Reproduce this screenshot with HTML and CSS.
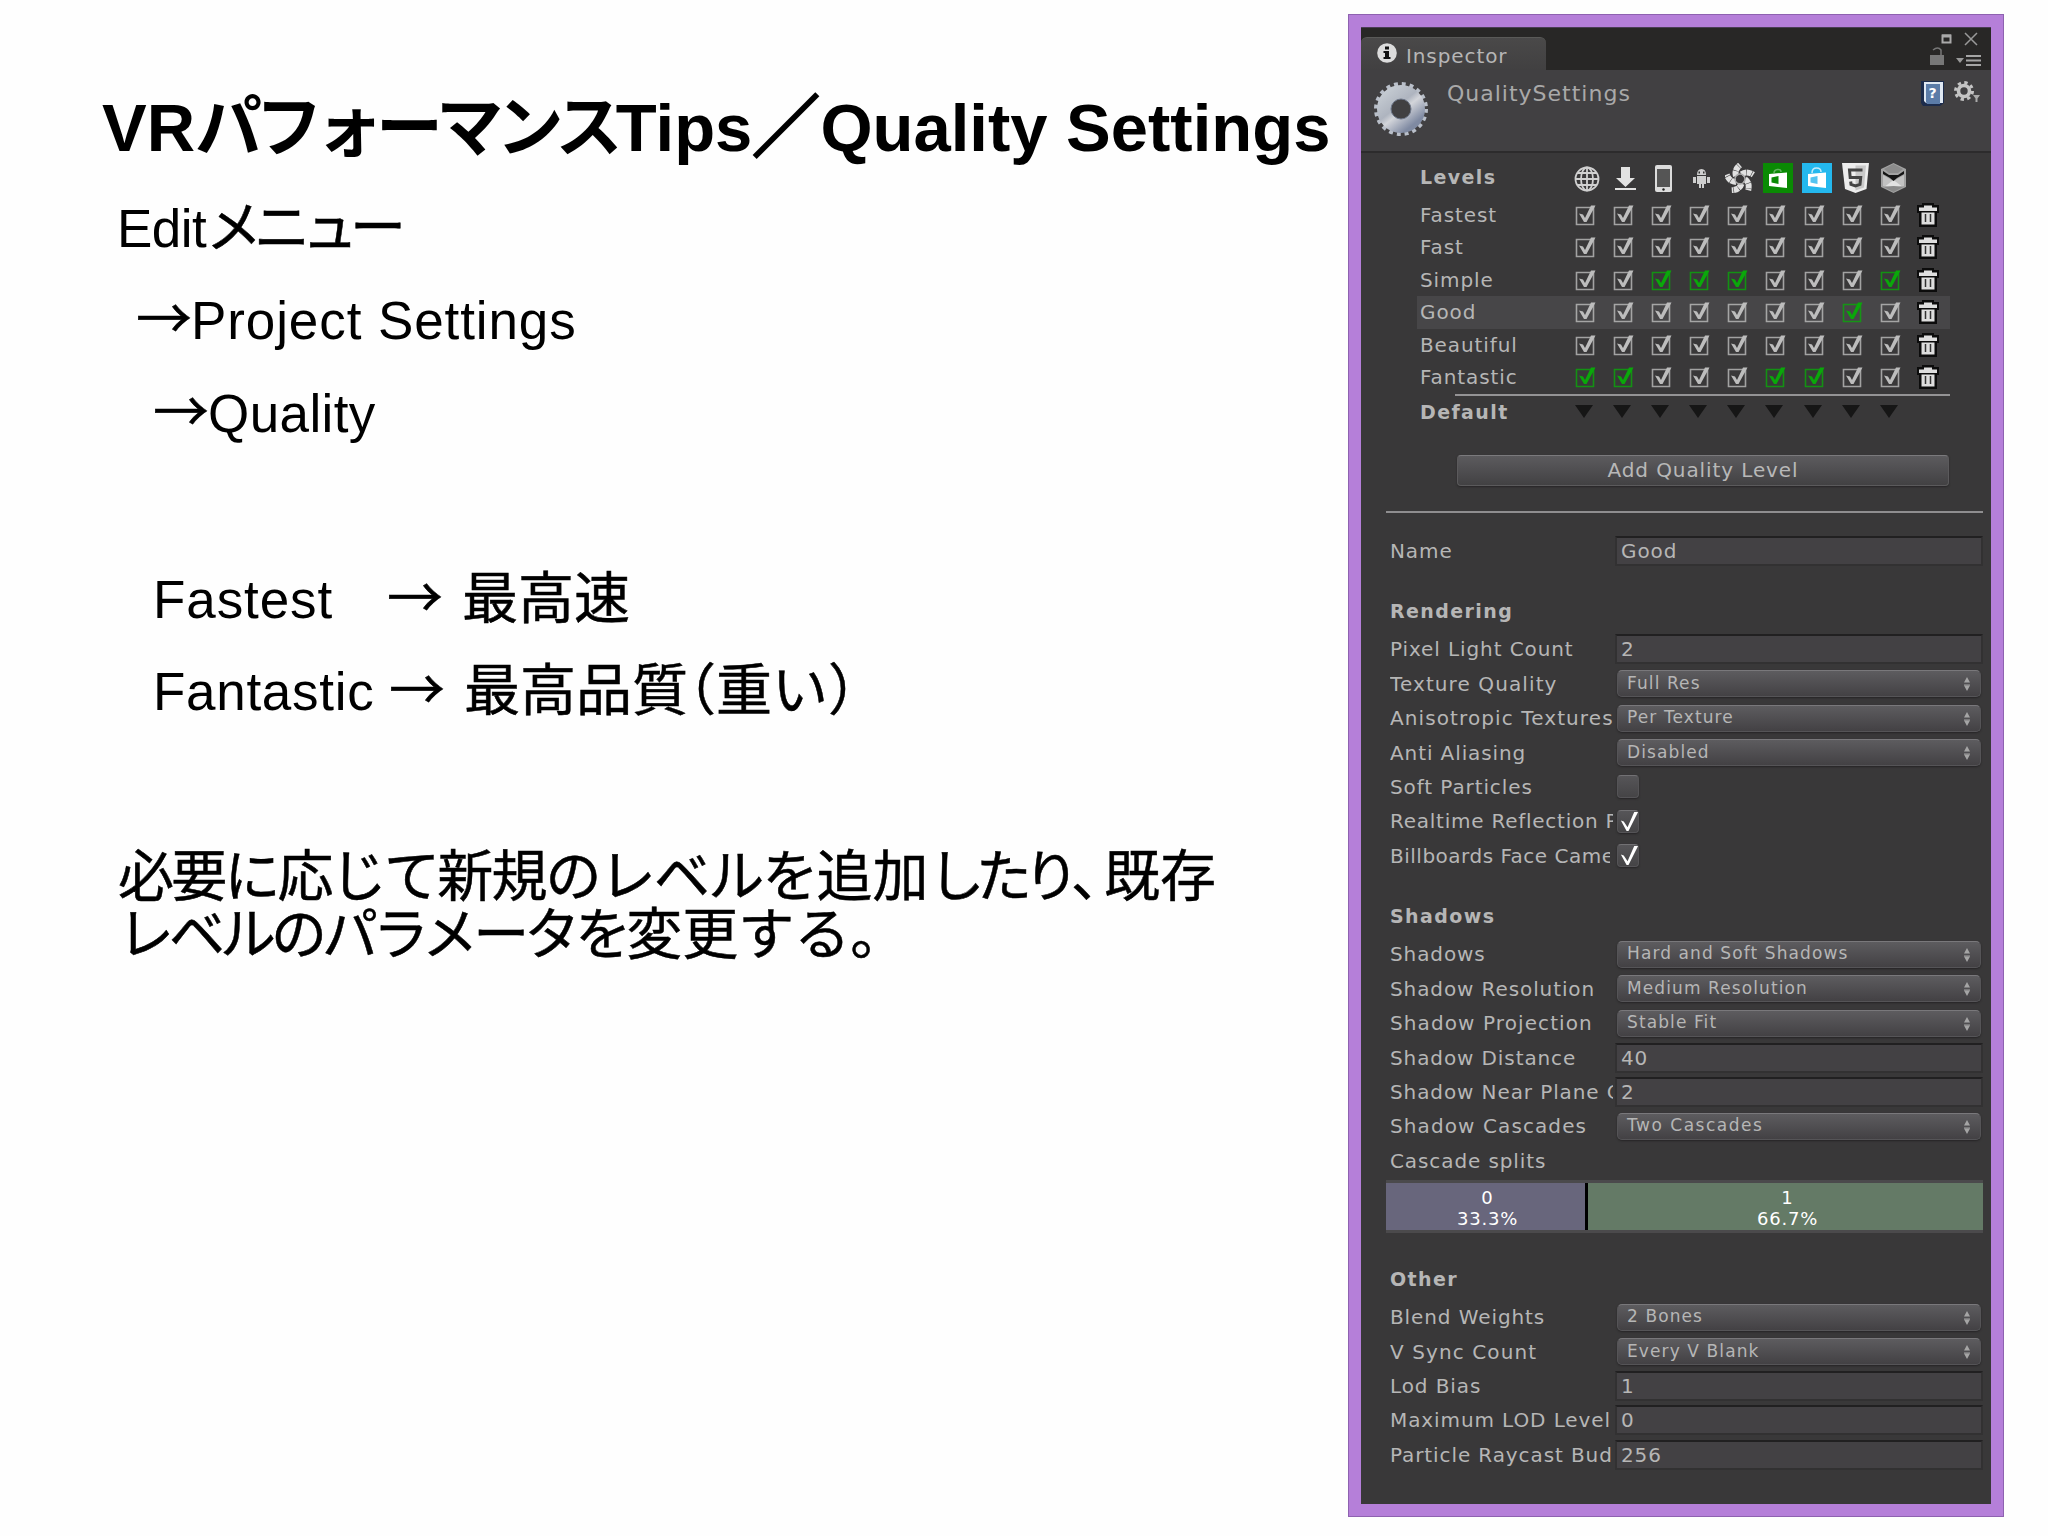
FILE: index.html
```html
<!DOCTYPE html>
<html lang="ja">
<head>
    <meta charset="UTF-8">
    <title>VRパフォーマンスTips／Quality Settings</title>
    <link rel="stylesheet" href="styles.css">
</head>
<body>

<!-- icons used by the levels table -->
<svg class="sprites" width="0" height="0">
    <symbol id="check" viewBox="0 0 22 22">
        <path d="M1.5 3.5h17v17h-17z" fill="none" stroke="currentColor" stroke-width="1.6" opacity=".8"/>
        <path d="M4 9.500l4 1 2 3.500 6-12.500h4.500L11.500 18H9z" fill="currentColor"/>
    </symbol>
    <symbol id="trash" viewBox="0 0 22 24">
        <path d="M0 2h5V0h12v2h5v8h-2v14H2V10H0z" fill="#0c0c0c"/>
        <path d="M2 4.500h5V2.500h8v2h5v3.500H2zM4.500 9.500h13v12h-13z" fill="#dedede"/>
        <path d="M8.500 11v8M13.500 11v8" stroke="#333" stroke-width="1.500"/>
    </symbol>
</svg>

<div class="slide">
    <div class="notes">
        <h1>VR<span class="kana-title">パフォーマンス</span>Tips<span class="slash">／</span>Quality Settings</h1>
        <div class="line"><span class="latin w-edit">Edit</span><span class="kana">メニュー</span></div>
        <div class="line in1"><span class="arrow">→</span><span class="latin w-project">Project Settings</span></div>
        <div class="line in2"><span class="arrow">→</span><span class="latin">Quality</span></div>
        <div class="line"></div>
        <div class="line in2"><span class="latin w-fastest">Fastest</span><span class="arrow arrow-wide">→</span><span>最高速</span></div>
        <div class="line in2"><span class="latin w-fantastic">Fantastic</span><span class="arrow arrow-wide">→</span><span>最高品質</span><span class="paren-l">（</span><span class="heavy">重い</span><span class="paren-r">）</span></div>
        <div class="line"></div>
        <p class="summary"><span class="s1">必要に応じて</span><span class="s2">新規のレベルを</span><span class="s0">追加</span><span class="s3">したり</span><span class="comma">、</span>既存<br><span class="s4">レベルのパラメータを</span><span class="s5">変更する。</span></p>
    </div>

    <div class="inspector">
        <div class="tabbar">
            <div class="tab">
                <svg width="20" height="20" viewBox="0 0 20 20"><circle cx="10" cy="10" r="9.800" fill="#dcdcdc"/><path d="M8 3.500h4v3H8zM6.500 8H12v6h1.500v2h-7v-2H8v-4H6.500z" fill="#111"/></svg>
                <span>Inspector</span>
            </div>
            <svg class="winbtns" width="56" height="38" viewBox="0 0 56 38">
                <path d="M13.500 4.500h8v7h-8z" fill="none" stroke="#aaa" stroke-width="2"/><path d="M13 5h9" stroke="#aaa" stroke-width="3"/>
                <path d="M36 2l12 12M48 2L36 14" stroke="#999" stroke-width="1.500"/>
                <path d="M1 24h14v10H1z" fill="#777"/><path d="M4 19q5-4 8 0v5" fill="none" stroke="#777" stroke-width="1.500"/>
                <path d="M27 27h8l-4 5z" fill="#999"/>
                <path d="M37 25h15M37 29.500h15M37 34h15" stroke="#a5a5a5" stroke-width="2"/>
            </svg>
        </div>

        <div class="header">
            <svg class="gear" width="56" height="56" viewBox="-28 -28 56 56">
                <defs><linearGradient id="steel" x1="0" y1="0" x2=".8" y2="1"><stop offset="0" stop-color="#c5cbd2"/><stop offset=".45" stop-color="#aeb4bf"/><stop offset=".6" stop-color="#d3d5da"/><stop offset="1" stop-color="#7f8aa2"/></linearGradient></defs>
                <circle r="24.500" fill="none" stroke="#b9bfc9" stroke-width="5" stroke-dasharray="3.850 3.850"/>
                <circle r="17" fill="none" stroke="url(#steel)" stroke-width="14"/>
                <circle r="10" fill="none" stroke="#6d7688" stroke-width="1"/>
            </svg>
            <span class="title">QualitySettings</span>
            <svg class="tools" width="62" height="28" viewBox="0 0 62 28">
                <path d="M1 1h23v22l-4 3H3l-2-3z" fill="#1c2c4c"/><path d="M4 2h19v21H6l-2-2z" fill="#dfe8f2"/><path d="M6 4h14v20H7l-1-2z" fill="#5b7ca8"/>
                <text x="13" y="18" class="q">?</text>
                <circle cx="44" cy="11" r="5.500" fill="none" stroke="#c4c4c4" stroke-width="3.600"/>
                <circle cx="44" cy="11" r="8.500" fill="none" stroke="#c4c4c4" stroke-width="3" stroke-dasharray="3.340 3.340"/>
                <path d="M53 15h7l-2.500 3.500V22h-2v-3.500z" fill="#aaa"/>
            </svg>
        </div>

        <div class="content">
            <div class="levels">
                <div class="level platforms">
                    <b>Levels</b>
                    <svg viewBox="0 0 30 30"><g fill="none" stroke="#d0d0d0" stroke-width="1.800"><circle cx="15" cy="16" r="11.500"/><ellipse cx="15" cy="16" rx="6" ry="11.500"/><path d="M15 4v24M3 16h24M5 10h20M5 22h20"/></g></svg>
                    <svg viewBox="0 0 30 30"><path d="M11 4h9v11h5l-9.500 9L6 15h5z" fill="#e2e2e2"/><path d="M5 26h21" stroke="#e2e2e2" stroke-width="2"/></svg>
                    <svg viewBox="0 0 30 30"><rect x="6" y="2" width="17" height="27" rx="2" fill="#dcdcdc"/><path d="M8 6h13v18H8z" fill="#555"/><circle cx="14.500" cy="26.500" r="1.200" fill="#222"/></svg>
                    <svg viewBox="0 0 30 30"><path d="M10 12q0-6 4.500-6t4.500 6zM10 13h9v8h-2v4h-2v-4h-1v4h-2v-4h-2zM6 14h3v6H6zM20 14h3v6h-3z" fill="#cfcfcf"/><path d="M11.500 9.500h1.500M16 9.500h1.500" stroke="#333" stroke-width="1.800"/></svg>
                    <svg viewBox="0 0 30 30">
                        <g stroke="#e0e0e0" stroke-width="6" fill="none" stroke-dasharray="5 .5">
                            <path id="blade" d="M11 13Q9 7 15 2"/>
                            <use href="#blade" transform="rotate(72 15 16)"/>
                            <use href="#blade" transform="rotate(144 15 16)"/>
                            <use href="#blade" transform="rotate(216 15 16)"/>
                            <use href="#blade" transform="rotate(288 15 16)"/>
                        </g>
                        <circle cx="15" cy="16" r="5" fill="none" stroke="#a8a8a8" stroke-width="1.500"/>
                    </svg>
                    <svg viewBox="0 0 30 30"><path d="M0 0h30v30H0z" fill="#0a8a04"/><path d="M6 11l18-1.500V25L6 23z" fill="#fff"/><path d="M8.500 14.500l7-1.500v8l-7-1.500z" fill="#0a8a04"/><path d="M11 10q0-3 3.500-3.500T18 9" fill="none" stroke="#61b35d" stroke-width="1.500"/></svg>
                    <svg viewBox="0 0 30 30"><path d="M0 0h30v30H0z" fill="#24b8ee"/><path d="M6 11l18-1.500V25L6 23z" fill="#fff"/><path d="M8.500 14.500l7-1.500v8l-7-1.500z" fill="#54c4f0"/><path d="M10 10q0-5 4.500-5T19 9" fill="none" stroke="#c2eaf9" stroke-width="1.500"/></svg>
                    <svg viewBox="0 0 30 30"><path d="M2 0h27l-2.500 26L15.500 30 5 26z" fill="#ededed"/><path d="M15.500 2.500H26l-2 22-8.500 3z" fill="#c9c9c9"/><path d="M22.500 7h-13l.7 7.500h10.500l-.7 7-4.500 1.500-4.500-1.500-.3-3" fill="none" stroke="#444" stroke-width="3"/></svg>
                    <svg viewBox="0 0 30 30">
                        <path d="M15.500 0L28 6v18l-12.500 6L3 24V6z" fill="#a2a2a2"/>
                        <path d="M15.500 1L25 6l-5 4h-9L6 6z" fill="#8b8b8b"/>
                        <path d="M5 12l10.500 6L26 12v11l-10.500 2L5 23z" fill="#c2c2c2"/>
                        <path d="M15.500 17l8 6h-16z" fill="#e2e2e2"/>
                        <path d="M5 8l6 4h9l6-4v3l-7 4-3.500 3-3.500-3-7-4z" fill="#141414"/>
                        <path d="M6 24l9.500-1 9.500 1-9.500 5z" fill="#8a8a8a"/>
                    </svg>
                </div>
                <div id="levelRows"></div>
                <div class="rule-short"></div>
                <div class="level defaults" id="defaults"><b>Default</b></div>
            </div>
            <button class="add">Add Quality Level</button>
            <div class="rule"></div>

            <div class="row name"><label>Name</label><div class="input">Good</div></div>

            <h3>Rendering</h3>
            <div class="row"><label>Pixel Light Count</label><div class="input">2</div></div>
            <div class="row"><label class="wide">Texture Quality</label><div class="popup">Full Res</div></div>
            <div class="row"><label class="wide">Anisotropic Textures</label><div class="popup">Per Texture</div></div>
            <div class="row"><label>Anti Aliasing</label><div class="popup">Disabled</div></div>
            <div class="row"><label>Soft Particles</label><div class="toggle"></div></div>
            <div class="row"><label class="tight">Realtime Reflection Probes</label><div class="toggle"><svg viewBox="0 0 22 23"><path d="M3 10l3 1 4 6L17 1h4L11 21H9z" fill="#fff"/></svg></div></div>
            <div class="row"><label class="tighter">Billboards Face Camera</label><div class="toggle"><svg viewBox="0 0 22 23"><path d="M3 10l3 1 4 6L17 1h4L11 21H9z" fill="#fff"/></svg></div></div>

            <h3>Shadows</h3>
            <div class="row"><label>Shadows</label><div class="popup">Hard and Soft Shadows</div></div>
            <div class="row"><label>Shadow Resolution</label><div class="popup">Medium Resolution</div></div>
            <div class="row"><label class="wide">Shadow Projection</label><div class="popup">Stable Fit</div></div>
            <div class="row"><label>Shadow Distance</label><div class="input">40</div></div>
            <div class="row"><label>Shadow Near Plane Offset</label><div class="input">2</div></div>
            <div class="row"><label class="wide">Shadow Cascades</label><div class="popup spaced">Two Cascades</div></div>
            <div class="row"><label>Cascade splits</label></div>
            <div class="cascades">
                <div class="split first">0<br>33.3%</div>
                <div class="split second">1<br>66.7%</div>
            </div>

            <h3>Other</h3>
            <div class="row"><label>Blend Weights</label><div class="popup">2 Bones</div></div>
            <div class="row"><label class="wide">V Sync Count</label><div class="popup">Every V Blank</div></div>
            <div class="row"><label>Lod Bias</label><div class="input">1</div></div>
            <div class="row"><label>Maximum LOD Level</label><div class="input">0</div></div>
            <div class="row"><label>Particle Raycast Budget</label><div class="input">256</div></div>
        </div>
    </div>
</div>

<script>
    // green = platforms that use this level by default
    const levels = [
        { name: "Fastest", green: [] },
        { name: "Fast", green: [] },
        { name: "Simple", green: [2, 3, 4, 8] },
        { name: "Good", green: [7], selected: true },
        { name: "Beautiful", green: [] },
        { name: "Fantastic", green: [0, 1, 5, 6] }
    ];

    let html = "";
    levels.forEach(level => {
        html += `<div class="level${level.selected ? " selected" : ""}"><span>${level.name}</span>`;
        for (let i = 0; i < 9; i++) {
            html += `<svg class="check${level.green.includes(i) ? " green" : ""}"><use href="#check"/></svg>`;
        }
        html += `<svg class="trash"><use href="#trash"/></svg></div>`;
    });
    document.getElementById("levelRows").innerHTML = html;

    // dropdown arrows of the default row
    let arrows = "";
    for (let i = 0; i < 9; i++) arrows += `<i></i>`;
    document.getElementById("defaults").innerHTML += arrows;

    // up/down marker inside each popup
    document.querySelectorAll(".popup").forEach(p => {
        p.innerHTML += `<svg width="8" height="14" viewBox="0 0 8 14"><path d="M4 0l3 5.500H1zM4 14L1 8.500h6z" fill="#a5a5a5"/><path d="M1 8h6" stroke="#a5a5a5"/></svg>`;
    });
</script>

</body>
</html>
```
FILE: styles.css
```css
* {
    box-sizing: border-box;
}
body {
    margin: 0;
    background: #fefefe;
    overflow: hidden;
}
.sprites {
    position: absolute;
}
.slide {
    display: flex;
    width: 2048px;
    height: 1536px;
}

/* left side */
.notes {
    width: 1348px;
    padding: 88px 0 0 102px;
    font-family: "Noto Sans CJK JP", sans-serif;
    font-size: 56px;
    color: #000;
    white-space: nowrap;
    -webkit-text-stroke: .5px #000;
}
h1 {
    margin: 0;
    height: 88.5px;
    line-height: 80px;
    font-family: "Liberation Sans", "Noto Sans CJK JP", sans-serif;
    font-size: 67px;
    font-weight: bold;
    -webkit-text-stroke: 0;
}
.kana-title {
    letter-spacing: -6.7px;
}
.slash {
    -webkit-text-stroke: 2.5px #000;
    margin-right: 1px;
}
.line {
    display: flex;
    align-items: baseline;
    height: 92.8px;
    line-height: 92.8px;
    padding-left: 15px;
}
.line.in1 {
    padding-left: 34px;
}
.line.in2 {
    padding-left: 51px;
}
.latin {
    font-family: "Liberation Sans", sans-serif;
    font-size: 53px;
    letter-spacing: .4px;
    -webkit-text-stroke: 0;
}
.w-edit {
    width: 89px;
    letter-spacing: -.5px;
}
.w-project {
    letter-spacing: .9px;
}
.kana {
    letter-spacing: -8px;
}
.arrow {
    width: 55px;
    margin-right: 0;
}
.w-fastest {
    width: 234px;
    letter-spacing: .9px;
}
.w-fantastic {
    width: 236px;
    letter-spacing: .7px;
}
.arrow-wide {
    margin-right: 20px;
}
.paren-l {
    margin-left: -28px;
}
.heavy {
    letter-spacing: 0;
}
.summary {
    margin: 17px 0 0 16px;
    line-height: 57.5px;
}
.s1 {
    letter-spacing: -2.8px;
}
.s2 {
    letter-spacing: -1.8px;
}
.s3 {
    letter-spacing: -8.5px;
}
.comma {
    letter-spacing: -23px;
}
.s4 {
    letter-spacing: -5px;
}
.s5 {
    letter-spacing: 0;
}

/* inspector window */
.inspector {
    width: 656px;
    height: 1503px;
    margin-top: 14px;
    border: 13px solid #b57fd9;
    outline: 1px solid #8e62b0;
    outline-offset: -1px;
    background: #393839;
    color: #b6b6b6;
    font-family: "DejaVu Sans", sans-serif;
    font-size: 20px;
    letter-spacing: .9px;
    white-space: nowrap;
}
.tabbar {
    display: flex;
    justify-content: space-between;
    align-items: flex-end;
    height: 43px;
    background: #282726;
    border-top: 1px solid #4b3d55;
}
.tab {
    display: flex;
    align-items: center;
    gap: 9px;
    width: 185px;
    height: 33px;
    padding-left: 16px;
    border-radius: 6px 6px 0 0;
    border-top: 1px solid #5a5a58;
    background: linear-gradient(#4a4949, #414041);
}
.tab svg {
    margin-top: -2px;
}
.tab span {
    padding-top: 3px;
}
.winbtns {
    margin: 0 6px 1px 0;
}
.header {
    display: flex;
    align-items: flex-start;
    height: 83px;
    padding: 11px 8px 0 12px;
    background: #414042;
    border-bottom: 2px solid #2c2b2c;
}
.header .title {
    flex: 1;
    margin: 0 0 0 18px;
    font-size: 22px;
    letter-spacing: 1px;
    color: #a9a9a9;
}
.tools {
    margin: -1px 1px 0 0;
}
.tools .q {
    font: bold 14px "DejaVu Sans", sans-serif;
    fill: #fff;
    text-anchor: middle;
}
.content {
    padding: 7px 8px 0 25px;
}

/* quality levels table */
.levels {
    width: 533px;
    margin-left: 31px;
}
.level {
    display: flex;
    align-items: center;
    height: 32.5px;
    padding: 0 0 1px 3px;
}
.level > :first-child {
    width: 155px;
}
.level.selected {
    background: #474648;
}
.level svg {
    flex: none;
    width: 22px;
    height: 22px;
    margin-right: 16.1px;
}
.level.platforms {
    height: 38.8px;
    padding-bottom: 3px;
}
.level.platforms > :first-child {
    width: 152px;
    padding-bottom: 2px;
}
.level.platforms svg {
    width: 30px;
    height: 30px;
    margin: 0 8.3px 0 0;
}
.check {
    color: #bdbdbd;
}
.check.green {
    color: #0aa80a;
}
.level .trash {
    height: 24px;
    margin-left: -1px;
    margin-right: 0;
}
.rule-short {
    height: 2px;
    margin-left: 38px;
    background: #949395;
}
.level.defaults i {
    width: 18px;
    margin-right: 20.1px;
    border: 9px solid transparent;
    border-top: 13px solid #161616;
    border-bottom: 0;
}
b,
h3 {
    letter-spacing: 1.4px;
    font-size: 19px;
}
.add {
    display: block;
    width: 492px;
    height: 31px;
    margin: 26.6px 0 25px 71px;
    padding: 0;
    border: 1px solid #5b5a5c;
    border-top-color: #7b7a7d;
    border-radius: 4px;
    background: linear-gradient(#5c5b5e, #424143);
    box-shadow: 0 1px 2px #262526;
    color: #b8b8b8;
    font: inherit;
    letter-spacing: .9px;
}
.rule {
    height: 2px;
    margin-right: 0;
    background: #8f8e90;
}

/* property rows */
.row {
    display: flex;
    align-items: center;
    height: 34.4px;
    padding-left: 4px;
}
.row label {
    width: 223px;
    overflow: hidden;
}
.row label.wide {
    letter-spacing: 1.1px;
}
.row label.tight {
    letter-spacing: .75px;
}
.row label.tighter {
    letter-spacing: .5px;
    width: 220px;
    margin-right: 3px;
}
.row.name {
    margin-top: 20.5px;
}
h3 {
    height: 34px;
    line-height: 34px;
    margin: 26.4px 0 4px 4px;
}
.input {
    width: 368px;
    height: 30px;
    margin-left: 2px;
    padding-left: 4px;
    line-height: 26px;
    background: #434144;
    border: 2px solid #323132;
    border-top-color: #212021;
}
.popup {
    display: flex;
    align-items: center;
    justify-content: space-between;
    width: 364px;
    height: 27px;
    margin-left: 4px;
    padding: 0 9px 2px;
    border: 1px solid #555457;
    border-top-color: #79787b;
    border-radius: 5px;
    background: linear-gradient(#5d5c5f, #434144);
    box-shadow: 0 1px 2px #252425;
    font-size: 17px;
    letter-spacing: 1.1px;
}
.popup.spaced {
    letter-spacing: 1.5px;
}
.popup svg {
    margin-top: 3px;
}
.toggle {
    width: 22px;
    height: 23px;
    margin-left: 4px;
    border: 1px solid #555457;
    border-top-color: #727174;
    border-radius: 4px;
    background: linear-gradient(#565558, #454446);
    box-shadow: 0 1px 2px #252425;
}
.toggle svg {
    display: block;
    width: 21px;
    height: 22px;
}
.cascades {
    display: flex;
    height: 53px;
    margin-top: 2px;
    margin-bottom: 29px;
    border-top: 3px solid #4b4a4c;
    border-bottom: 3px solid #4b4a4c;
    color: #fff;
    font-size: 18px;
    line-height: 21px;
    text-align: center;
    letter-spacing: .8px;
}
.split {
    padding: 4px 0 0 4px;
}
.first {
    width: 202px;
    background: #68667c;
    border-right: 3px solid #000;
}
.second {
    flex: 1;
    background: #647a66;
}
```
